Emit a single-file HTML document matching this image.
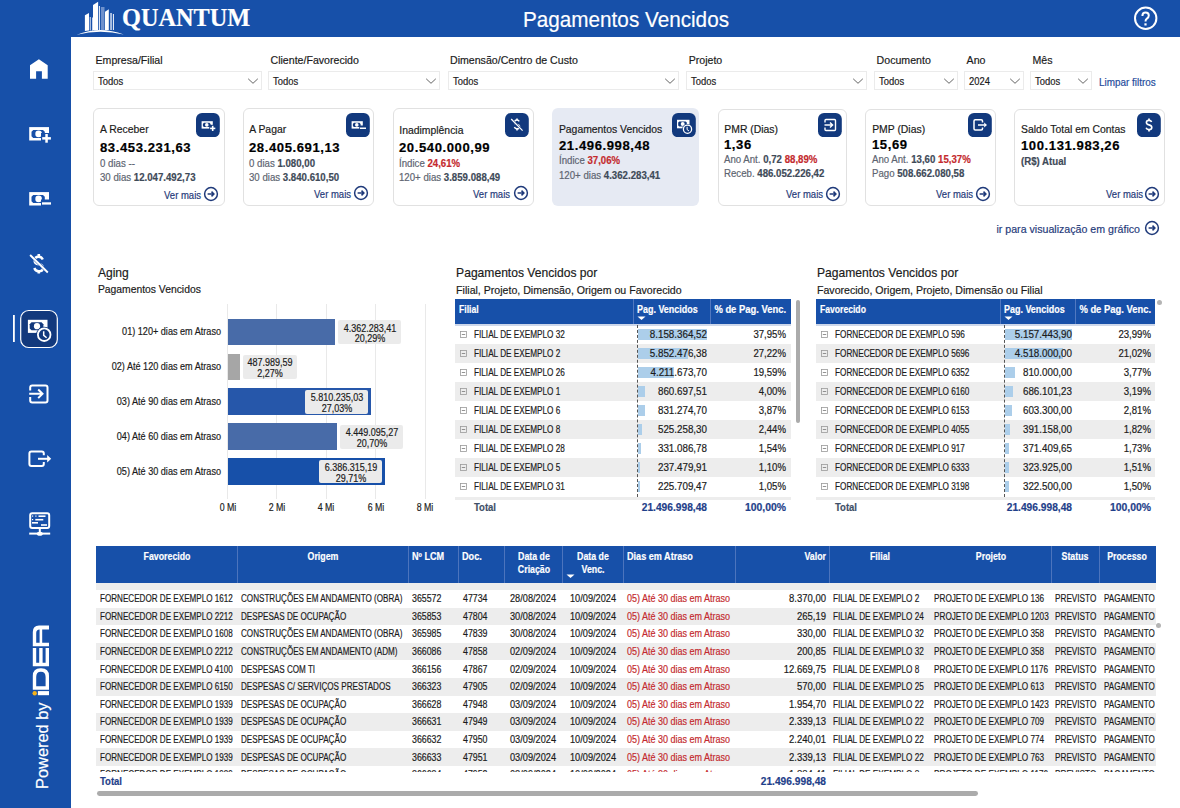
<!DOCTYPE html>
<html><head><meta charset="utf-8"><title>Pagamentos Vencidos</title>
<style>
html,body{margin:0;padding:0;width:1180px;height:808px;overflow:hidden;background:#fff;}
body{position:relative;font-family:"Liberation Sans",sans-serif;}
.t{position:absolute;white-space:nowrap;line-height:1;-webkit-text-stroke:0.18px currentColor;}
.r{position:absolute;}
b{font-weight:bold;}
</style></head><body>
<div class="r" style="left:0.00px;top:0.00px;width:71.00px;height:808.00px;background:#1750a9;"></div>
<div class="r" style="left:71.00px;top:0.00px;width:1109.00px;height:36.50px;background:#1750a9;"></div>
<svg class="r" style="left:0;top:0" width="1180" height="40" viewBox="0 0 1180 40">
<g fill="#fff">
<path d="M84.9 15.3 L89 13 L89 30.5 L84.9 31 Z"/>
<path d="M93 5.1 L98.1 1.8 L98.1 30 L93 30 Z"/>
<path d="M105 11.7 L108.8 9.2 L108.8 30 L105 30 Z"/>
<rect x="89.7" y="17" width="1.1" height="13.5" fill="#c9d6ee"/>
<rect x="92" y="17.5" width="1" height="13" fill="#c9d6ee"/>
<rect x="98.9" y="6" width="1.1" height="24" fill="#dfe7f5"/>
<rect x="100.9" y="7" width="3.6" height="23" fill="#6f91cc"/>
<rect x="110.1" y="13" width="1.9" height="17" fill="#a9bfe4"/>
<rect x="112.9" y="14" width="1.1" height="16" fill="#dfe7f5"/>
<path d="M76.8 34.8 Q100 25.5 123.8 34.6 Q100 29 76.8 34.8 Z"/>
</g></svg>
<div class="t" style="top:6.43px;font-size:24.3px;color:#fff;font-weight:bold;font-family:'Liberation Serif';left:122.00px;">QUANTUM</div>
<div class="t" style="top:9.15px;font-size:22.5px;color:#fff;left:626.30px;transform:translateX(-50%) scaleX(0.92);transform-origin:50% 0;">Pagamentos Vencidos</div>
<svg class="r" style="left:1130px;top:3px" width="32" height="32" viewBox="0 0 32 32">
<circle cx="15.7" cy="15.3" r="10.7" fill="none" stroke="#fff" stroke-width="2"/>
<path d="M12.4 12.9 Q12.4 9.6 15.6 9.6 Q18.8 9.6 18.8 12.6 Q18.8 14.4 16.9 15.6 Q15.5 16.5 15.5 18.6" fill="none" stroke="#fff" stroke-width="2"/>
<rect x="14.4" y="20.3" width="2.2" height="2.2" fill="#fff"/>
</svg>
<svg class="r" style="left:0;top:0" width="71" height="808" viewBox="0 0 71 808"><path d="M30 65.3 L38.9 59.2 L47.7 65.3 V78.7 H41.9 V71.3 H36.1 V78.7 H30 Z" fill="#fff"/><g transform="translate(0,0)"><rect x="29.2" y="127.1" width="19.8" height="13.4" fill="#fff"/><path d="M33.2 129.9 H43 L44.8 131.8 V136.2 L43 138 H33.2 L31.5 136.2 V131.8 Z" fill="#1750a9"/><circle cx="38.6" cy="133.9" r="3.3" fill="#fff"/><rect x="41" y="133" width="11" height="11" fill="#1750a9"/><rect x="45.3" y="134" width="2.5" height="8.7" fill="#fff"/><rect x="42.2" y="137.1" width="8.7" height="2.5" fill="#fff"/></g><g transform="translate(0,65)"><rect x="29.2" y="127.1" width="19.8" height="13.4" fill="#fff"/><path d="M33.2 129.9 H43 L44.8 131.8 V136.2 L43 138 H33.2 L31.5 136.2 V131.8 Z" fill="#1750a9"/><circle cx="38.6" cy="133.9" r="3.3" fill="#fff"/><rect x="41" y="134.5" width="11" height="11" fill="#1750a9"/><rect x="42" y="137.3" width="9" height="2.3" fill="#fff"/></g><g fill="none" stroke="#fff" stroke-linecap="butt">
<path d="M42.8 259.5 Q41.5 256.7 38.6 256.7 Q34.6 256.7 34.6 260.5 Q34.6 263.8 38.8 264.3 Q43 264.9 43 268.3 Q43 271.3 38.6 271.3 Q35.4 271.3 34.3 268" stroke-width="2.4"/>
<path d="M38.8 254 V257 M38.8 270.5 V273.4" stroke-width="2.6"/>
<path d="M30.1 255 L47.8 272.5" stroke-width="3.0" stroke="#1750a9"/>
<path d="M30.1 255 L47.8 272.5" stroke-width="1.9"/>
</g><rect x="20.7" y="310.5" width="36.6" height="37" rx="8" fill="#12397d" stroke="#fff" stroke-width="1.2"/><rect x="13" y="315" width="1.8" height="27" fill="#fff"/><rect x="27.9" y="319.8" width="19.6" height="13.1" fill="#fff"/>
<path d="M31.5 322.3 H41.5 L43.4 324.2 V328.4 L41.5 330.3 H31.5 L29.7 328.4 V324.2 Z" fill="#12397d"/>
<circle cx="37" cy="326.2" r="3.1" fill="#fff"/>
<circle cx="44.2" cy="334.7" r="8" fill="#12397d"/>
<circle cx="44.2" cy="334.7" r="6.3" fill="none" stroke="#fff" stroke-width="1.8"/>
<path d="M43.7 331.2 V335.3 L46.6 337.8" fill="none" stroke="#fff" stroke-width="1.5"/><g fill="none" stroke="#fff" stroke-width="2">
<path d="M30.2 390.6 V387.4 Q30.2 385.4 32.2 385.4 H45.5 Q47.5 385.4 47.5 387.4 V400.5 Q47.5 402.5 45.5 402.5 H32.2 Q30.2 402.5 30.2 400.5 V397"/>
<path d="M29.2 393.8 H42.3 M38.2 389.5 L42.5 393.8 L38.2 398.1"/>
</g><g fill="none" stroke="#fff" stroke-width="2">
<path d="M43.8 455.3 V453.6 Q43.8 451.6 41.8 451.6 H31.4 Q29.4 451.6 29.4 453.6 V464 Q29.4 466 31.4 466 H41.8 Q43.8 466 43.8 464 V462"/>
<path d="M38 458.8 H48"/>
</g>
<path d="M47.2 455.1 L51.2 458.8 L47.2 462.4 Z" fill="#fff"/><g fill="none" stroke="#fff" stroke-width="2">
<rect x="30.2" y="513.2" width="19" height="14.8" rx="2"/>
<path d="M39.8 529 V532"/>
<path d="M29.2 533.6 H50.2"/>
</g>
<ellipse cx="39.8" cy="533.7" rx="3" ry="2" fill="#fff"/>
<g fill="#fff">
<rect x="32" y="515.5" width="1.2" height="1.2"/><rect x="35.3" y="515.5" width="1.2" height="1.2"/><rect x="38.5" y="515.4" width="7" height="1.6"/>
<rect x="32" y="519" width="1.2" height="1.2"/><rect x="35.3" y="518.9" width="8" height="1.6"/>
<rect x="32" y="522" width="6" height="1.6"/><rect x="41" y="524.2" width="6" height="1.6"/>
</g></svg>
<div class="t" style="left:47.9px;top:788.6px;font-size:16.4px;color:#fff;transform:rotate(-90deg);transform-origin:0 0;line-height:1;"><span style="position:relative;top:-13.9px">Powered by</span></div>
<svg class="r" style="left:0;top:600px" width="71" height="100" viewBox="0 600 71 100">
<g fill="#fff">
<rect x="37.9" y="691.1" width="11.1" height="4.1"/>
<path fill-rule="evenodd" d="M49 689.8 H32.8 V676 Q32.8 668.3 40.5 668.3 H41.3 Q49 668.3 49 676 Z M45.6 686.2 H36.2 V677 Q36.2 671.8 40.9 671.8 Q45.6 671.8 45.6 677 Z"/>
<path d="M49 666.3 H32.8 V648 H36.2 V662.8 H39.2 V648 H42.6 V662.8 H45.6 V648 H49 Z"/>
<path d="M49 646.2 H32.8 V632 Q32.8 625.4 39 625.4 H49 V629.4 H42.2 V642.8 H49 Z M39.6 642.8 V629.4 Q36.2 629.4 36.2 633 V642.8 Z" fill-rule="evenodd"/>
</g>
<circle cx="34.7" cy="693.3" r="2.2" fill="#f5b21b"/>
</svg>
<div class="t" style="top:55.23px;font-size:10.6px;color:#1b1b1b;left:95.50px;">Empresa/Filial</div>
<div class="r" style="left:93.1px;top:71.3px;width:166.7px;height:17.2px;border:1px solid #ebebeb;background:#fff"></div>
<div class="t" style="top:77.23px;font-size:10px;color:#1b1b1b;left:98.10px;transform:scaleX(0.94);transform-origin:0 0;">Todos</div>
<svg class="r" style="left:246.8px;top:75.8px" width="12" height="10" viewBox="0 0 12 10"><path d="M1.2 2.8 L6 7.3 L10.8 2.8" fill="none" stroke="#555" stroke-width="0.9"/></svg>
<div class="t" style="top:55.23px;font-size:10.6px;color:#1b1b1b;left:270.50px;">Cliente/Favorecido</div>
<div class="r" style="left:268.0px;top:71.3px;width:170.3px;height:17.2px;border:1px solid #ebebeb;background:#fff"></div>
<div class="t" style="top:77.23px;font-size:10px;color:#1b1b1b;left:273.00px;transform:scaleX(0.94);transform-origin:0 0;">Todos</div>
<svg class="r" style="left:425.3px;top:75.8px" width="12" height="10" viewBox="0 0 12 10"><path d="M1.2 2.8 L6 7.3 L10.8 2.8" fill="none" stroke="#555" stroke-width="0.9"/></svg>
<div class="t" style="top:55.23px;font-size:10.6px;color:#1b1b1b;left:450.00px;">Dimensão/Centro de Custo</div>
<div class="r" style="left:447.5px;top:71.3px;width:229.8px;height:17.2px;border:1px solid #ebebeb;background:#fff"></div>
<div class="t" style="top:77.23px;font-size:10px;color:#1b1b1b;left:452.50px;transform:scaleX(0.94);transform-origin:0 0;">Todos</div>
<svg class="r" style="left:664.3px;top:75.8px" width="12" height="10" viewBox="0 0 12 10"><path d="M1.2 2.8 L6 7.3 L10.8 2.8" fill="none" stroke="#555" stroke-width="0.9"/></svg>
<div class="t" style="top:55.23px;font-size:10.6px;color:#1b1b1b;left:688.70px;">Projeto</div>
<div class="r" style="left:686.2px;top:71.3px;width:178.6px;height:17.2px;border:1px solid #ebebeb;background:#fff"></div>
<div class="t" style="top:77.23px;font-size:10px;color:#1b1b1b;left:691.20px;transform:scaleX(0.94);transform-origin:0 0;">Todos</div>
<svg class="r" style="left:851.8px;top:75.8px" width="12" height="10" viewBox="0 0 12 10"><path d="M1.2 2.8 L6 7.3 L10.8 2.8" fill="none" stroke="#555" stroke-width="0.9"/></svg>
<div class="t" style="top:55.23px;font-size:10.6px;color:#1b1b1b;left:876.60px;">Documento</div>
<div class="r" style="left:874.4px;top:71.3px;width:81.3px;height:17.2px;border:1px solid #ebebeb;background:#fff"></div>
<div class="t" style="top:77.23px;font-size:10px;color:#1b1b1b;left:879.40px;transform:scaleX(0.94);transform-origin:0 0;">Todos</div>
<svg class="r" style="left:942.7px;top:75.8px" width="12" height="10" viewBox="0 0 12 10"><path d="M1.2 2.8 L6 7.3 L10.8 2.8" fill="none" stroke="#555" stroke-width="0.9"/></svg>
<div class="t" style="top:55.23px;font-size:10.6px;color:#1b1b1b;left:966.60px;">Ano</div>
<div class="r" style="left:964.4px;top:71.3px;width:57.2px;height:17.2px;border:1px solid #ebebeb;background:#fff"></div>
<div class="t" style="top:77.23px;font-size:10px;color:#1b1b1b;left:969.40px;transform:scaleX(0.94);transform-origin:0 0;">2024</div>
<svg class="r" style="left:1008.6px;top:75.8px" width="12" height="10" viewBox="0 0 12 10"><path d="M1.2 2.8 L6 7.3 L10.8 2.8" fill="none" stroke="#555" stroke-width="0.9"/></svg>
<div class="t" style="top:55.23px;font-size:10.6px;color:#1b1b1b;left:1032.50px;">Mês</div>
<div class="r" style="left:1030.3px;top:71.3px;width:59.9px;height:17.2px;border:1px solid #ebebeb;background:#fff"></div>
<div class="t" style="top:77.23px;font-size:10px;color:#1b1b1b;left:1035.30px;transform:scaleX(0.94);transform-origin:0 0;">Todos</div>
<svg class="r" style="left:1077.2px;top:75.8px" width="12" height="10" viewBox="0 0 12 10"><path d="M1.2 2.8 L6 7.3 L10.8 2.8" fill="none" stroke="#555" stroke-width="0.9"/></svg>
<div class="t" style="top:77.53px;font-size:10px;color:#1f4c9c;left:1099.00px;transform:scaleX(0.99);transform-origin:0 0;">Limpar filtros</div>
<div class="r" style="left:93.3px;top:108.3px;width:129.3px;height:95.9px;background:#fff;border:1px solid #e1e1e1;border-radius:6px"></div>
<svg class="r" style="left:196.3px;top:112.7px" width="24" height="24.5" viewBox="0 0 24 24.5"><rect x="0" y="0" width="23.8" height="24.2" rx="6" fill="#12397d"/><g fill="#fff" stroke="none"><rect x="5.6" y="8.2" width="11.2" height="7.4" /><path d="M7.9 9.8 H13.5 L14.6 10.9 V13 L13.5 14.1 H7.9 L6.9 13 V10.9 Z" fill="#12397d"/><circle cx="10.8" cy="11.9" r="1.8"/><rect x="13.3" y="11.8" width="7" height="7" fill="#12397d"/><rect x="15.9" y="12.8" width="1.6" height="5.2"/><rect x="14.1" y="14.6" width="5.2" height="1.6"/></g></svg>
<div class="t" style="top:124.80px;font-size:10.4px;color:#1b1b1b;left:100.10px;">A Receber</div>
<div class="t" style="top:141.73px;font-size:12.6px;color:#000;font-weight:bold;letter-spacing:0.55px;left:100.10px;transform:scaleX(1.04);transform-origin:0 0;">83.453.231,63</div>
<div class="t" style="top:158.53px;font-size:10px;color:#5d6470;left:100.10px;transform:scaleX(0.965);transform-origin:0 0;">0 dias --</div>
<div class="t" style="top:172.73px;font-size:10px;color:#5d6470;left:100.10px;transform:scaleX(0.965);transform-origin:0 0;">30 dias <b style="color:#3e4a58">12.047.492,73</b></div>
<div class="t" style="top:191.13px;font-size:10px;color:#1f3a7a;left:200.50px;transform-origin:0 0;transform:scaleX(0.95) translateX(-100%);">Ver mais</div>
<svg class="r" style="left:203.3px;top:186.2px" width="16" height="16" viewBox="0 0 16 16"><circle cx="8" cy="8" r="6.4" fill="none" stroke="#1f3a7a" stroke-width="1.5"/><path d="M4.6 8 H10.8 M8.5 5.6 L10.9 8 L8.5 10.4" fill="none" stroke="#1f3a7a" stroke-width="1.5"/></svg>
<div class="r" style="left:243.4px;top:108.3px;width:129.0px;height:95.9px;background:#fff;border:1px solid #e1e1e1;border-radius:6px"></div>
<svg class="r" style="left:345.6px;top:112.7px" width="24" height="24.5" viewBox="0 0 24 24.5"><rect x="0" y="0" width="23.8" height="24.2" rx="6" fill="#12397d"/><g fill="#fff" stroke="none"><rect x="5.6" y="8.2" width="11.2" height="7.4" /><path d="M7.9 9.8 H13.5 L14.6 10.9 V13 L13.5 14.1 H7.9 L6.9 13 V10.9 Z" fill="#12397d"/><circle cx="10.8" cy="11.9" r="1.8"/><rect x="13.3" y="12.5" width="7.5" height="6" fill="#12397d"/><rect x="14" y="14.5" width="6" height="1.5"/></g></svg>
<div class="t" style="top:124.80px;font-size:10.4px;color:#1b1b1b;left:249.20px;">A Pagar</div>
<div class="t" style="top:141.73px;font-size:12.6px;color:#000;font-weight:bold;letter-spacing:0.55px;left:249.20px;transform:scaleX(1.04);transform-origin:0 0;">28.405.691,13</div>
<div class="t" style="top:158.53px;font-size:10px;color:#5d6470;left:249.20px;transform:scaleX(0.965);transform-origin:0 0;">0 dias <b style="color:#3e4a58">1.080,00</b></div>
<div class="t" style="top:172.73px;font-size:10px;color:#5d6470;left:249.20px;transform:scaleX(0.965);transform-origin:0 0;">30 dias <b style="color:#3e4a58">3.840.610,50</b></div>
<div class="t" style="top:189.84px;font-size:10px;color:#1f3a7a;left:350.50px;transform-origin:0 0;transform:scaleX(0.95) translateX(-100%);">Ver mais</div>
<svg class="r" style="left:353.3px;top:184.9px" width="16" height="16" viewBox="0 0 16 16"><circle cx="8" cy="8" r="6.4" fill="none" stroke="#1f3a7a" stroke-width="1.5"/><path d="M4.6 8 H10.8 M8.5 5.6 L10.9 8 L8.5 10.4" fill="none" stroke="#1f3a7a" stroke-width="1.5"/></svg>
<div class="r" style="left:392.5px;top:108.3px;width:139.0px;height:95.9px;background:#fff;border:1px solid #e1e1e1;border-radius:6px"></div>
<svg class="r" style="left:505.3px;top:112.7px" width="24" height="24.5" viewBox="0 0 24 24.5"><rect x="0" y="0" width="23.8" height="24.2" rx="6" fill="#12397d"/><g fill="#fff" stroke="none"></g><g fill="none" stroke="#fff"><path d="M14.2 8.3 Q13.5 7 12 7 Q9.6 7 9.6 9.2 Q9.6 11 12 11.4 Q14.6 11.8 14.6 13.9 Q14.6 15.8 12 15.8 Q10.1 15.8 9.4 14" stroke-width="1.5"/><path d="M12 5.5 V7.3 M12 15.5 V17.5" stroke-width="1.6"/><path d="M6.2 6 L17.6 17.6" stroke-width="2.1" stroke="#12397d"/><path d="M6.2 6 L17.6 17.6" stroke-width="1.2"/></g></svg>
<div class="t" style="top:125.70px;font-size:10.4px;color:#1b1b1b;left:399.30px;">Inadimplência</div>
<div class="t" style="top:142.33px;font-size:12.6px;color:#000;font-weight:bold;letter-spacing:0.55px;left:399.30px;transform:scaleX(1.04);transform-origin:0 0;">20.540.000,99</div>
<div class="t" style="top:159.33px;font-size:10px;color:#5d6470;left:399.30px;transform:scaleX(0.965);transform-origin:0 0;">Índice <b style="color:#c42a2e">24,61%</b></div>
<div class="t" style="top:173.33px;font-size:10px;color:#5d6470;left:399.30px;transform:scaleX(0.965);transform-origin:0 0;">120+ dias <b style="color:#3e4a58">3.859.088,49</b></div>
<div class="t" style="top:189.74px;font-size:10px;color:#1f3a7a;left:510.20px;transform-origin:0 0;transform:scaleX(0.95) translateX(-100%);">Ver mais</div>
<svg class="r" style="left:512.9px;top:184.8px" width="16" height="16" viewBox="0 0 16 16"><circle cx="8" cy="8" r="6.4" fill="none" stroke="#1f3a7a" stroke-width="1.5"/><path d="M4.6 8 H10.8 M8.5 5.6 L10.9 8 L8.5 10.4" fill="none" stroke="#1f3a7a" stroke-width="1.5"/></svg>
<div class="r" style="left:552.1px;top:108.3px;width:146.9px;height:97.7px;background:#e6eaf3;border-radius:6px"></div>
<svg class="r" style="left:671.5px;top:112.7px" width="24" height="24.5" viewBox="0 0 24 24.5"><rect x="0" y="0" width="23.8" height="24.2" rx="6" fill="#12397d"/><g fill="#fff" stroke="none"><rect x="5" y="6.8" width="12.5" height="8.5"/><path d="M7.3 8.4 H13.6 L14.8 9.6 V12.4 L13.6 13.6 H7.3 L6.2 12.4 V9.6 Z" fill="#12397d"/><circle cx="10.7" cy="11" r="2"/><circle cx="15.5" cy="16.2" r="5.3" fill="#12397d"/></g><g fill="none" stroke="#fff"><circle cx="15.5" cy="16.2" r="4.1" stroke-width="1.3"/><path d="M15.1 13.8 V16.6 L17 18" stroke-width="1"/></g></svg>
<div class="t" style="top:124.80px;font-size:10.4px;color:#1b1b1b;left:558.90px;">Pagamentos Vencidos</div>
<div class="t" style="top:139.63px;font-size:12.6px;color:#000;font-weight:bold;letter-spacing:0.55px;left:558.90px;transform:scaleX(1.04);transform-origin:0 0;">21.496.998,48</div>
<div class="t" style="top:156.43px;font-size:10px;color:#5d6470;left:558.90px;transform:scaleX(0.965);transform-origin:0 0;">Índice <b style="color:#c42a2e">37,06%</b></div>
<div class="t" style="top:170.63px;font-size:10px;color:#5d6470;left:558.90px;transform:scaleX(0.965);transform-origin:0 0;">120+ dias <b style="color:#3e4a58">4.362.283,41</b></div>
<div class="r" style="left:717.5px;top:109.2px;width:127.7px;height:95.0px;background:#fff;border:1px solid #e1e1e1;border-radius:6px"></div>
<svg class="r" style="left:818.2px;top:112.7px" width="24" height="24.5" viewBox="0 0 24 24.5"><rect x="0" y="0" width="23.8" height="24.2" rx="6" fill="#12397d"/><g fill="#fff" stroke="none"></g><g fill="none" stroke="#fff" stroke-width="1.4"><path d="M7 9.5 V7.5 Q7 6.5 8 6.5 H16.5 Q17.5 6.5 17.5 7.5 V16.5 Q17.5 17.5 16.5 17.5 H8 Q7 17.5 7 16.5 V14.5"/><path d="M6.5 12 H14.6 M12 9.4 L14.6 12 L12 14.6"/></g></svg>
<div class="t" style="top:124.50px;font-size:10.4px;color:#1b1b1b;left:724.30px;">PMR (Dias)</div>
<div class="t" style="top:139.03px;font-size:12.6px;color:#000;font-weight:bold;letter-spacing:0.55px;left:724.30px;transform:scaleX(1.04);transform-origin:0 0;">1,36</div>
<div class="t" style="top:155.33px;font-size:10px;color:#5d6470;left:724.30px;transform:scaleX(0.965);transform-origin:0 0;">Ano Ant. <b style="color:#3e4a58">0,72</b> <b style="color:#c42a2e">88,89%</b></div>
<div class="t" style="top:169.23px;font-size:10px;color:#5d6470;left:724.30px;transform:scaleX(0.965);transform-origin:0 0;">Receb. <b style="color:#3e4a58">486.052.226,42</b></div>
<div class="t" style="top:190.44px;font-size:10px;color:#1f3a7a;left:822.70px;transform-origin:0 0;transform:scaleX(0.95) translateX(-100%);">Ver mais</div>
<svg class="r" style="left:824.7px;top:185.5px" width="16" height="16" viewBox="0 0 16 16"><circle cx="8" cy="8" r="6.4" fill="none" stroke="#1f3a7a" stroke-width="1.5"/><path d="M4.6 8 H10.8 M8.5 5.6 L10.9 8 L8.5 10.4" fill="none" stroke="#1f3a7a" stroke-width="1.5"/></svg>
<div class="r" style="left:865.4px;top:109.2px;width:128.2px;height:95.0px;background:#fff;border:1px solid #e1e1e1;border-radius:6px"></div>
<svg class="r" style="left:967.5px;top:112.7px" width="24" height="24.5" viewBox="0 0 24 24.5"><rect x="0" y="0" width="23.8" height="24.2" rx="6" fill="#12397d"/><g fill="#fff" stroke="none"></g><g fill="none" stroke="#fff" stroke-width="1.5"><path d="M14.5 9.5 V8 Q14.5 6.8 13.3 6.8 H7.2 Q6 6.8 6 8 V15.8 Q6 17 7.2 17 H13.3 Q14.5 17 14.5 15.8 V14.5"/><path d="M10 12 H16.5"/></g><g fill="#fff"><path d="M16.2 9.5 L19 12 L16.2 14.5 Z"/></g></svg>
<div class="t" style="top:124.50px;font-size:10.4px;color:#1b1b1b;left:872.20px;">PMP (Dias)</div>
<div class="t" style="top:139.03px;font-size:12.6px;color:#000;font-weight:bold;letter-spacing:0.55px;left:872.20px;transform:scaleX(1.04);transform-origin:0 0;">15,69</div>
<div class="t" style="top:155.33px;font-size:10px;color:#5d6470;left:872.20px;transform:scaleX(0.965);transform-origin:0 0;">Ano Ant. <b style="color:#3e4a58">13,60</b> <b style="color:#c42a2e">15,37%</b></div>
<div class="t" style="top:169.23px;font-size:10px;color:#5d6470;left:872.20px;transform:scaleX(0.965);transform-origin:0 0;">Pago <b style="color:#3e4a58">508.662.080,58</b></div>
<div class="t" style="top:190.44px;font-size:10px;color:#1f3a7a;left:972.70px;transform-origin:0 0;transform:scaleX(0.95) translateX(-100%);">Ver mais</div>
<svg class="r" style="left:974.7px;top:185.5px" width="16" height="16" viewBox="0 0 16 16"><circle cx="8" cy="8" r="6.4" fill="none" stroke="#1f3a7a" stroke-width="1.5"/><path d="M4.6 8 H10.8 M8.5 5.6 L10.9 8 L8.5 10.4" fill="none" stroke="#1f3a7a" stroke-width="1.5"/></svg>
<div class="r" style="left:1014.3px;top:109.2px;width:148.5px;height:95.0px;background:#fff;border:1px solid #e1e1e1;border-radius:6px"></div>
<svg class="r" style="left:1136.5px;top:112.7px" width="24" height="24.5" viewBox="0 0 24 24.5"><rect x="0" y="0" width="23.8" height="24.2" rx="6" fill="#12397d"/><g fill="#fff" stroke="none"></g><g fill="none" stroke="#fff"><path d="M14.6 9 Q14 7.4 12 7.4 Q9.4 7.4 9.4 9.6 Q9.4 11.4 12 11.9 Q14.8 12.4 14.8 14.5 Q14.8 16.6 12 16.6 Q9.7 16.6 9.1 14.8" stroke-width="1.6"/><path d="M12 5.6 V7.6 M12 16.4 V18.6" stroke-width="1.7"/></g></svg>
<div class="t" style="top:124.80px;font-size:10.4px;color:#1b1b1b;left:1021.10px;">Saldo Total em Contas</div>
<div class="t" style="top:139.63px;font-size:12.6px;color:#000;font-weight:bold;letter-spacing:0.55px;left:1021.10px;transform:scaleX(1.04);transform-origin:0 0;">100.131.983,26</div>
<div class="t" style="top:157.03px;font-size:10px;color:#5d6470;left:1021.10px;transform:scaleX(0.965);transform-origin:0 0;"><b style="color:#3e4a58">(R$) Atual</b></div>
<div class="t" style="top:190.44px;font-size:10px;color:#1f3a7a;left:1142.70px;transform-origin:0 0;transform:scaleX(0.95) translateX(-100%);">Ver mais</div>
<svg class="r" style="left:1144.4px;top:185.5px" width="16" height="16" viewBox="0 0 16 16"><circle cx="8" cy="8" r="6.4" fill="none" stroke="#1f3a7a" stroke-width="1.5"/><path d="M4.6 8 H10.8 M8.5 5.6 L10.9 8 L8.5 10.4" fill="none" stroke="#1f3a7a" stroke-width="1.5"/></svg>
<div class="t" style="top:223.72px;font-size:11.2px;color:#1f3a7a;left:1140.20px;transform-origin:0 0;transform:scaleX(0.95) translateX(-100%);">ir para visualização em gráfico</div>
<svg class="r" style="left:1143.5px;top:220px" width="16" height="16" viewBox="0 0 16 16"><circle cx="8" cy="8" r="6.4" fill="none" stroke="#1f3a7a" stroke-width="1.5"/><path d="M4.6 8 H10.8 M8.5 5.6 L10.9 8 L8.5 10.4" fill="none" stroke="#1f3a7a" stroke-width="1.5"/></svg>
<div class="t" style="top:266.76px;font-size:12.1px;color:#1b1b1b;left:97.90px;">Aging</div>
<div class="t" style="top:284.74px;font-size:10.35px;color:#1b1b1b;left:97.90px;">Pagamentos Vencidos</div>
<div class="r" style="left:227.00px;top:304.00px;width:1.00px;height:195.00px;background:#e9e9e9;"></div>
<div class="t" style="top:502.54px;font-size:10px;color:#1b1b1b;left:227.50px;transform:translateX(-50%) scaleX(0.88);transform-origin:50% 0;">0 Mi</div>
<div class="r" style="left:276.40px;top:304.00px;width:1.00px;height:195.00px;background:#e9e9e9;"></div>
<div class="t" style="top:502.54px;font-size:10px;color:#1b1b1b;left:276.90px;transform:translateX(-50%) scaleX(0.88);transform-origin:50% 0;">2 Mi</div>
<div class="r" style="left:325.80px;top:304.00px;width:1.00px;height:195.00px;background:#e9e9e9;"></div>
<div class="t" style="top:502.54px;font-size:10px;color:#1b1b1b;left:326.30px;transform:translateX(-50%) scaleX(0.88);transform-origin:50% 0;">4 Mi</div>
<div class="r" style="left:375.20px;top:304.00px;width:1.00px;height:195.00px;background:#e9e9e9;"></div>
<div class="t" style="top:502.54px;font-size:10px;color:#1b1b1b;left:375.70px;transform:translateX(-50%) scaleX(0.88);transform-origin:50% 0;">6 Mi</div>
<div class="r" style="left:424.60px;top:304.00px;width:1.00px;height:195.00px;background:#e9e9e9;"></div>
<div class="t" style="top:502.54px;font-size:10px;color:#1b1b1b;left:425.10px;transform:translateX(-50%) scaleX(0.88);transform-origin:50% 0;">8 Mi</div>
<div class="r" style="left:227.50px;top:318.60px;width:107.75px;height:26.80px;background:#486ba8;"></div>
<div class="t" style="top:327.44px;font-size:10px;color:#1b1b1b;left:220.80px;transform-origin:0 0;transform:scaleX(0.91) translateX(-100%);">01) 120+ dias em Atraso</div>
<div class="r" style="left:338.25px;top:320.10px;width:62.50px;height:23.80px;background:#ebebeb;border-radius:2px"></div>
<div class="t" style="top:323.54px;font-size:10px;color:#1b1b1b;left:369.50px;transform:translateX(-50%) scaleX(0.9);transform-origin:50% 0;">4.362.283,41</div>
<div class="t" style="top:334.44px;font-size:10px;color:#1b1b1b;left:369.50px;transform:translateX(-50%) scaleX(0.9);transform-origin:50% 0;">20,29%</div>
<div class="r" style="left:227.50px;top:353.50px;width:12.05px;height:26.80px;background:#a6a6a6;"></div>
<div class="t" style="top:362.34px;font-size:10px;color:#1b1b1b;left:220.80px;transform-origin:0 0;transform:scaleX(0.91) translateX(-100%);">02) Até 120 dias em Atraso</div>
<div class="r" style="left:242.55px;top:355.00px;width:54.40px;height:23.80px;background:#ebebeb;border-radius:2px"></div>
<div class="t" style="top:358.44px;font-size:10px;color:#1b1b1b;left:269.75px;transform:translateX(-50%) scaleX(0.9);transform-origin:50% 0;">487.989,59</div>
<div class="t" style="top:369.34px;font-size:10px;color:#1b1b1b;left:269.75px;transform:translateX(-50%) scaleX(0.9);transform-origin:50% 0;">2,27%</div>
<div class="r" style="left:227.50px;top:388.40px;width:143.51px;height:26.80px;background:#2657aa;"></div>
<div class="t" style="top:397.24px;font-size:10px;color:#1b1b1b;left:220.80px;transform-origin:0 0;transform:scaleX(0.91) translateX(-100%);">03) Até 90 dias em Atraso</div>
<div class="r" style="left:305.21px;top:389.90px;width:63.00px;height:23.80px;background:#ebebeb;border-radius:2px"></div>
<div class="t" style="top:393.34px;font-size:10px;color:#1b1b1b;left:336.71px;transform:translateX(-50%) scaleX(0.9);transform-origin:50% 0;">5.810.235,03</div>
<div class="t" style="top:404.24px;font-size:10px;color:#1b1b1b;left:336.71px;transform:translateX(-50%) scaleX(0.9);transform-origin:50% 0;">27,03%</div>
<div class="r" style="left:227.50px;top:423.30px;width:109.89px;height:26.80px;background:#486ba8;"></div>
<div class="t" style="top:432.14px;font-size:10px;color:#1b1b1b;left:220.80px;transform-origin:0 0;transform:scaleX(0.91) translateX(-100%);">04) Até 60 dias em Atraso</div>
<div class="r" style="left:340.39px;top:424.80px;width:62.50px;height:23.80px;background:#ebebeb;border-radius:2px"></div>
<div class="t" style="top:428.24px;font-size:10px;color:#1b1b1b;left:371.64px;transform:translateX(-50%) scaleX(0.9);transform-origin:50% 0;">4.449.095,27</div>
<div class="t" style="top:439.14px;font-size:10px;color:#1b1b1b;left:371.64px;transform:translateX(-50%) scaleX(0.9);transform-origin:50% 0;">20,70%</div>
<div class="r" style="left:227.50px;top:458.20px;width:157.74px;height:26.80px;background:#1750a9;"></div>
<div class="t" style="top:467.04px;font-size:10px;color:#1b1b1b;left:220.80px;transform-origin:0 0;transform:scaleX(0.91) translateX(-100%);">05) Até 30 dias em Atraso</div>
<div class="r" style="left:319.44px;top:459.70px;width:63.00px;height:23.80px;background:#ebebeb;border-radius:2px"></div>
<div class="t" style="top:463.14px;font-size:10px;color:#1b1b1b;left:350.94px;transform:translateX(-50%) scaleX(0.9);transform-origin:50% 0;">6.386.315,19</div>
<div class="t" style="top:474.04px;font-size:10px;color:#1b1b1b;left:350.94px;transform:translateX(-50%) scaleX(0.9);transform-origin:50% 0;">29,71%</div>
<div class="t" style="top:266.76px;font-size:12.1px;color:#1b1b1b;left:456.10px;">Pagamentos Vencidos por</div>
<div class="t" style="top:284.63px;font-size:10.6px;color:#1b1b1b;left:456.10px;">Filial, Projeto, Dimensão, Origem ou Favorecido</div>
<div class="r" style="left:455.20px;top:299.20px;width:335.50px;height:24.50px;background:#1750a9;"></div>
<div class="r" style="left:633.10px;top:299.20px;width:1.00px;height:24.50px;background:#5178c0;"></div>
<div class="r" style="left:709.90px;top:299.20px;width:1.00px;height:24.50px;background:#5178c0;"></div>
<div class="t" style="top:304.54px;font-size:10px;color:#fff;font-weight:bold;left:458.90px;transform:scaleX(0.86);transform-origin:0 0;">Filial</div>
<div class="t" style="top:304.54px;font-size:10px;color:#fff;font-weight:bold;left:637.40px;transform:scaleX(0.895);transform-origin:0 0;">Pag. Vencidos</div>
<div class="t" style="top:304.54px;font-size:10px;color:#fff;font-weight:bold;left:786.30px;transform-origin:0 0;transform:scaleX(0.94) translateX(-100%);">% de Pag. Venc.</div>
<svg class="r" style="left:637.4px;top:315.5px" width="10" height="5" viewBox="0 0 10 5"><path d="M0.5 0.5 L8.5 0.5 L4.5 4 Z" fill="#fff"/></svg>
<div class="r" style="left:637.70px;top:328.90px;width:69.70px;height:11.60px;background:#acceea;"></div>
<svg class="r" style="left:459.8px;top:331.3px" width="7" height="7" viewBox="0 0 7 7"><rect x="0.5" y="0.5" width="6" height="6" fill="none" stroke="#9a9a9a" stroke-width="0.8"/><path d="M1.8 3.5 H5.2" stroke="#777" stroke-width="0.8"/></svg>
<div class="t" style="top:330.04px;font-size:10px;color:#1b1b1b;left:474.20px;transform:scaleX(0.82);transform-origin:0 0;">FILIAL DE EXEMPLO 32</div>
<div class="t" style="top:330.24px;font-size:10px;color:#1b1b1b;left:707.20px;transform-origin:0 0;transform:scaleX(0.98) translateX(-100%);">8.158.364,52</div>
<div class="t" style="top:330.24px;font-size:10px;color:#1b1b1b;left:786.30px;transform-origin:0 0;transform:scaleX(0.96) translateX(-100%);">37,95%</div>
<div class="r" style="left:455.20px;top:344.30px;width:335.50px;height:19.00px;background:#ededed;"></div>
<div class="r" style="left:637.70px;top:347.90px;width:50.00px;height:11.60px;background:#acceea;"></div>
<svg class="r" style="left:459.8px;top:350.3px" width="7" height="7" viewBox="0 0 7 7"><rect x="0.5" y="0.5" width="6" height="6" fill="none" stroke="#9a9a9a" stroke-width="0.8"/><path d="M1.8 3.5 H5.2" stroke="#777" stroke-width="0.8"/></svg>
<div class="t" style="top:349.04px;font-size:10px;color:#1b1b1b;left:474.20px;transform:scaleX(0.82);transform-origin:0 0;">FILIAL DE EXEMPLO 2</div>
<div class="t" style="top:349.24px;font-size:10px;color:#1b1b1b;left:707.20px;transform-origin:0 0;transform:scaleX(0.98) translateX(-100%);">5.852.476,38</div>
<div class="t" style="top:349.24px;font-size:10px;color:#1b1b1b;left:786.30px;transform-origin:0 0;transform:scaleX(0.96) translateX(-100%);">27,22%</div>
<div class="r" style="left:637.70px;top:366.90px;width:35.98px;height:11.60px;background:#acceea;"></div>
<svg class="r" style="left:459.8px;top:369.3px" width="7" height="7" viewBox="0 0 7 7"><rect x="0.5" y="0.5" width="6" height="6" fill="none" stroke="#9a9a9a" stroke-width="0.8"/><path d="M1.8 3.5 H5.2" stroke="#777" stroke-width="0.8"/></svg>
<div class="t" style="top:368.04px;font-size:10px;color:#1b1b1b;left:474.20px;transform:scaleX(0.82);transform-origin:0 0;">FILIAL DE EXEMPLO 26</div>
<div class="t" style="top:368.24px;font-size:10px;color:#1b1b1b;left:707.20px;transform-origin:0 0;transform:scaleX(0.98) translateX(-100%);">4.211.673,70</div>
<div class="t" style="top:368.24px;font-size:10px;color:#1b1b1b;left:786.30px;transform-origin:0 0;transform:scaleX(0.96) translateX(-100%);">19,59%</div>
<div class="r" style="left:455.20px;top:382.30px;width:335.50px;height:19.00px;background:#ededed;"></div>
<div class="r" style="left:637.70px;top:385.90px;width:7.35px;height:11.60px;background:#acceea;"></div>
<svg class="r" style="left:459.8px;top:388.3px" width="7" height="7" viewBox="0 0 7 7"><rect x="0.5" y="0.5" width="6" height="6" fill="none" stroke="#9a9a9a" stroke-width="0.8"/><path d="M1.8 3.5 H5.2" stroke="#777" stroke-width="0.8"/></svg>
<div class="t" style="top:387.04px;font-size:10px;color:#1b1b1b;left:474.20px;transform:scaleX(0.82);transform-origin:0 0;">FILIAL DE EXEMPLO 1</div>
<div class="t" style="top:387.24px;font-size:10px;color:#1b1b1b;left:707.20px;transform-origin:0 0;transform:scaleX(0.98) translateX(-100%);">860.697,51</div>
<div class="t" style="top:387.24px;font-size:10px;color:#1b1b1b;left:786.30px;transform-origin:0 0;transform:scaleX(0.96) translateX(-100%);">4,00%</div>
<div class="r" style="left:637.70px;top:404.90px;width:7.10px;height:11.60px;background:#acceea;"></div>
<svg class="r" style="left:459.8px;top:407.3px" width="7" height="7" viewBox="0 0 7 7"><rect x="0.5" y="0.5" width="6" height="6" fill="none" stroke="#9a9a9a" stroke-width="0.8"/><path d="M1.8 3.5 H5.2" stroke="#777" stroke-width="0.8"/></svg>
<div class="t" style="top:406.04px;font-size:10px;color:#1b1b1b;left:474.20px;transform:scaleX(0.82);transform-origin:0 0;">FILIAL DE EXEMPLO 6</div>
<div class="t" style="top:406.24px;font-size:10px;color:#1b1b1b;left:707.20px;transform-origin:0 0;transform:scaleX(0.98) translateX(-100%);">831.274,70</div>
<div class="t" style="top:406.24px;font-size:10px;color:#1b1b1b;left:786.30px;transform-origin:0 0;transform:scaleX(0.96) translateX(-100%);">3,87%</div>
<div class="r" style="left:455.20px;top:420.30px;width:335.50px;height:19.00px;background:#ededed;"></div>
<div class="r" style="left:637.70px;top:423.90px;width:4.49px;height:11.60px;background:#acceea;"></div>
<svg class="r" style="left:459.8px;top:426.3px" width="7" height="7" viewBox="0 0 7 7"><rect x="0.5" y="0.5" width="6" height="6" fill="none" stroke="#9a9a9a" stroke-width="0.8"/><path d="M1.8 3.5 H5.2" stroke="#777" stroke-width="0.8"/></svg>
<div class="t" style="top:425.04px;font-size:10px;color:#1b1b1b;left:474.20px;transform:scaleX(0.82);transform-origin:0 0;">FILIAL DE EXEMPLO 8</div>
<div class="t" style="top:425.24px;font-size:10px;color:#1b1b1b;left:707.20px;transform-origin:0 0;transform:scaleX(0.98) translateX(-100%);">525.258,30</div>
<div class="t" style="top:425.24px;font-size:10px;color:#1b1b1b;left:786.30px;transform-origin:0 0;transform:scaleX(0.96) translateX(-100%);">2,44%</div>
<div class="r" style="left:637.70px;top:442.90px;width:2.83px;height:11.60px;background:#acceea;"></div>
<svg class="r" style="left:459.8px;top:445.3px" width="7" height="7" viewBox="0 0 7 7"><rect x="0.5" y="0.5" width="6" height="6" fill="none" stroke="#9a9a9a" stroke-width="0.8"/><path d="M1.8 3.5 H5.2" stroke="#777" stroke-width="0.8"/></svg>
<div class="t" style="top:444.04px;font-size:10px;color:#1b1b1b;left:474.20px;transform:scaleX(0.82);transform-origin:0 0;">FILIAL DE EXEMPLO 28</div>
<div class="t" style="top:444.24px;font-size:10px;color:#1b1b1b;left:707.20px;transform-origin:0 0;transform:scaleX(0.98) translateX(-100%);">331.086,78</div>
<div class="t" style="top:444.24px;font-size:10px;color:#1b1b1b;left:786.30px;transform-origin:0 0;transform:scaleX(0.96) translateX(-100%);">1,54%</div>
<div class="r" style="left:455.20px;top:458.30px;width:335.50px;height:19.00px;background:#ededed;"></div>
<div class="r" style="left:637.70px;top:461.90px;width:2.03px;height:11.60px;background:#acceea;"></div>
<svg class="r" style="left:459.8px;top:464.3px" width="7" height="7" viewBox="0 0 7 7"><rect x="0.5" y="0.5" width="6" height="6" fill="none" stroke="#9a9a9a" stroke-width="0.8"/><path d="M1.8 3.5 H5.2" stroke="#777" stroke-width="0.8"/></svg>
<div class="t" style="top:463.04px;font-size:10px;color:#1b1b1b;left:474.20px;transform:scaleX(0.82);transform-origin:0 0;">FILIAL DE EXEMPLO 5</div>
<div class="t" style="top:463.24px;font-size:10px;color:#1b1b1b;left:707.20px;transform-origin:0 0;transform:scaleX(0.98) translateX(-100%);">237.479,91</div>
<div class="t" style="top:463.24px;font-size:10px;color:#1b1b1b;left:786.30px;transform-origin:0 0;transform:scaleX(0.96) translateX(-100%);">1,10%</div>
<div class="r" style="left:637.70px;top:480.90px;width:1.93px;height:11.60px;background:#acceea;"></div>
<svg class="r" style="left:459.8px;top:483.3px" width="7" height="7" viewBox="0 0 7 7"><rect x="0.5" y="0.5" width="6" height="6" fill="none" stroke="#9a9a9a" stroke-width="0.8"/><path d="M1.8 3.5 H5.2" stroke="#777" stroke-width="0.8"/></svg>
<div class="t" style="top:482.04px;font-size:10px;color:#1b1b1b;left:474.20px;transform:scaleX(0.82);transform-origin:0 0;">FILIAL DE EXEMPLO 31</div>
<div class="t" style="top:482.24px;font-size:10px;color:#1b1b1b;left:707.20px;transform-origin:0 0;transform:scaleX(0.98) translateX(-100%);">225.709,47</div>
<div class="t" style="top:482.24px;font-size:10px;color:#1b1b1b;left:786.30px;transform-origin:0 0;transform:scaleX(0.96) translateX(-100%);">1,05%</div>
<div class="r" style="left:455.20px;top:497.30px;width:335.50px;height:2.60px;background:#ededed;"></div>
<div class="r" style="left:455.20px;top:323.80px;width:335.50px;height:2.00px;background:#cdd7ea;"></div>
<div class="r" style="left:637.2px;top:325px;width:0;height:172px;border-left:1px dashed #555"></div>
<div class="t" style="top:503.44px;font-size:10px;color:#3f5068;font-weight:bold;left:474.20px;transform:scaleX(0.95);transform-origin:0 0;">Total</div>
<div class="t" style="top:503.44px;font-size:10px;color:#1f3f8a;font-weight:bold;left:707.20px;transform-origin:0 0;transform:scaleX(1.02) translateX(-100%);">21.496.998,48</div>
<div class="t" style="top:503.44px;font-size:10px;color:#1f3f8a;font-weight:bold;left:786.30px;transform-origin:0 0;transform:scaleX(1.04) translateX(-100%);">100,00%</div>
<div class="r" style="left:795.80px;top:300.20px;width:4.70px;height:122.80px;background:#ababab;border-radius:2.4px"></div>
<div class="t" style="top:266.76px;font-size:12.1px;color:#1b1b1b;left:817.00px;">Pagamentos Vencidos por</div>
<div class="t" style="top:284.63px;font-size:10.6px;color:#1b1b1b;left:817.00px;">Favorecido, Origem, Projeto, Dimensão ou Filial</div>
<div class="r" style="left:816.10px;top:299.20px;width:338.90px;height:24.50px;background:#1750a9;"></div>
<div class="r" style="left:999.90px;top:299.20px;width:1.00px;height:24.50px;background:#5178c0;"></div>
<div class="r" style="left:1074.70px;top:299.20px;width:1.00px;height:24.50px;background:#5178c0;"></div>
<div class="t" style="top:304.54px;font-size:10px;color:#fff;font-weight:bold;left:819.80px;transform:scaleX(0.86);transform-origin:0 0;">Favorecido</div>
<div class="t" style="top:304.54px;font-size:10px;color:#fff;font-weight:bold;left:1004.20px;transform:scaleX(0.895);transform-origin:0 0;">Pag. Vencidos</div>
<div class="t" style="top:304.54px;font-size:10px;color:#fff;font-weight:bold;left:1151.40px;transform-origin:0 0;transform:scaleX(0.94) translateX(-100%);">% de Pag. Venc.</div>
<svg class="r" style="left:1004.2px;top:315.5px" width="10" height="5" viewBox="0 0 10 5"><path d="M0.5 0.5 L8.5 0.5 L4.5 4 Z" fill="#fff"/></svg>
<div class="r" style="left:1004.50px;top:328.90px;width:67.30px;height:11.60px;background:#acceea;"></div>
<svg class="r" style="left:820.8px;top:331.3px" width="7" height="7" viewBox="0 0 7 7"><rect x="0.5" y="0.5" width="6" height="6" fill="none" stroke="#9a9a9a" stroke-width="0.8"/><path d="M1.8 3.5 H5.2" stroke="#777" stroke-width="0.8"/></svg>
<div class="t" style="top:330.04px;font-size:10px;color:#1b1b1b;left:835.00px;transform:scaleX(0.82);transform-origin:0 0;">FORNECEDOR DE EXEMPLO 596</div>
<div class="t" style="top:330.24px;font-size:10px;color:#1b1b1b;left:1072.00px;transform-origin:0 0;transform:scaleX(0.98) translateX(-100%);">5.157.443,90</div>
<div class="t" style="top:330.24px;font-size:10px;color:#1b1b1b;left:1151.40px;transform-origin:0 0;transform:scaleX(0.96) translateX(-100%);">23,99%</div>
<div class="r" style="left:816.10px;top:344.30px;width:338.90px;height:19.00px;background:#ededed;"></div>
<div class="r" style="left:1004.50px;top:347.90px;width:58.96px;height:11.60px;background:#acceea;"></div>
<svg class="r" style="left:820.8px;top:350.3px" width="7" height="7" viewBox="0 0 7 7"><rect x="0.5" y="0.5" width="6" height="6" fill="none" stroke="#9a9a9a" stroke-width="0.8"/><path d="M1.8 3.5 H5.2" stroke="#777" stroke-width="0.8"/></svg>
<div class="t" style="top:349.04px;font-size:10px;color:#1b1b1b;left:835.00px;transform:scaleX(0.82);transform-origin:0 0;">FORNECEDOR DE EXEMPLO 5696</div>
<div class="t" style="top:349.24px;font-size:10px;color:#1b1b1b;left:1072.00px;transform-origin:0 0;transform:scaleX(0.98) translateX(-100%);">4.518.000,00</div>
<div class="t" style="top:349.24px;font-size:10px;color:#1b1b1b;left:1151.40px;transform-origin:0 0;transform:scaleX(0.96) translateX(-100%);">21,02%</div>
<div class="r" style="left:1004.50px;top:366.90px;width:10.57px;height:11.60px;background:#acceea;"></div>
<svg class="r" style="left:820.8px;top:369.3px" width="7" height="7" viewBox="0 0 7 7"><rect x="0.5" y="0.5" width="6" height="6" fill="none" stroke="#9a9a9a" stroke-width="0.8"/><path d="M1.8 3.5 H5.2" stroke="#777" stroke-width="0.8"/></svg>
<div class="t" style="top:368.04px;font-size:10px;color:#1b1b1b;left:835.00px;transform:scaleX(0.82);transform-origin:0 0;">FORNECEDOR DE EXEMPLO 6352</div>
<div class="t" style="top:368.24px;font-size:10px;color:#1b1b1b;left:1072.00px;transform-origin:0 0;transform:scaleX(0.98) translateX(-100%);">810.000,00</div>
<div class="t" style="top:368.24px;font-size:10px;color:#1b1b1b;left:1151.40px;transform-origin:0 0;transform:scaleX(0.96) translateX(-100%);">3,77%</div>
<div class="r" style="left:816.10px;top:382.30px;width:338.90px;height:19.00px;background:#ededed;"></div>
<div class="r" style="left:1004.50px;top:385.90px;width:8.95px;height:11.60px;background:#acceea;"></div>
<svg class="r" style="left:820.8px;top:388.3px" width="7" height="7" viewBox="0 0 7 7"><rect x="0.5" y="0.5" width="6" height="6" fill="none" stroke="#9a9a9a" stroke-width="0.8"/><path d="M1.8 3.5 H5.2" stroke="#777" stroke-width="0.8"/></svg>
<div class="t" style="top:387.04px;font-size:10px;color:#1b1b1b;left:835.00px;transform:scaleX(0.82);transform-origin:0 0;">FORNECEDOR DE EXEMPLO 6160</div>
<div class="t" style="top:387.24px;font-size:10px;color:#1b1b1b;left:1072.00px;transform-origin:0 0;transform:scaleX(0.98) translateX(-100%);">686.101,23</div>
<div class="t" style="top:387.24px;font-size:10px;color:#1b1b1b;left:1151.40px;transform-origin:0 0;transform:scaleX(0.96) translateX(-100%);">3,19%</div>
<div class="r" style="left:1004.50px;top:404.90px;width:7.87px;height:11.60px;background:#acceea;"></div>
<svg class="r" style="left:820.8px;top:407.3px" width="7" height="7" viewBox="0 0 7 7"><rect x="0.5" y="0.5" width="6" height="6" fill="none" stroke="#9a9a9a" stroke-width="0.8"/><path d="M1.8 3.5 H5.2" stroke="#777" stroke-width="0.8"/></svg>
<div class="t" style="top:406.04px;font-size:10px;color:#1b1b1b;left:835.00px;transform:scaleX(0.82);transform-origin:0 0;">FORNECEDOR DE EXEMPLO 6153</div>
<div class="t" style="top:406.24px;font-size:10px;color:#1b1b1b;left:1072.00px;transform-origin:0 0;transform:scaleX(0.98) translateX(-100%);">603.300,00</div>
<div class="t" style="top:406.24px;font-size:10px;color:#1b1b1b;left:1151.40px;transform-origin:0 0;transform:scaleX(0.96) translateX(-100%);">2,81%</div>
<div class="r" style="left:816.10px;top:420.30px;width:338.90px;height:19.00px;background:#ededed;"></div>
<div class="r" style="left:1004.50px;top:423.90px;width:5.10px;height:11.60px;background:#acceea;"></div>
<svg class="r" style="left:820.8px;top:426.3px" width="7" height="7" viewBox="0 0 7 7"><rect x="0.5" y="0.5" width="6" height="6" fill="none" stroke="#9a9a9a" stroke-width="0.8"/><path d="M1.8 3.5 H5.2" stroke="#777" stroke-width="0.8"/></svg>
<div class="t" style="top:425.04px;font-size:10px;color:#1b1b1b;left:835.00px;transform:scaleX(0.82);transform-origin:0 0;">FORNECEDOR DE EXEMPLO 4055</div>
<div class="t" style="top:425.24px;font-size:10px;color:#1b1b1b;left:1072.00px;transform-origin:0 0;transform:scaleX(0.98) translateX(-100%);">391.158,00</div>
<div class="t" style="top:425.24px;font-size:10px;color:#1b1b1b;left:1151.40px;transform-origin:0 0;transform:scaleX(0.96) translateX(-100%);">1,82%</div>
<div class="r" style="left:1004.50px;top:442.90px;width:4.85px;height:11.60px;background:#acceea;"></div>
<svg class="r" style="left:820.8px;top:445.3px" width="7" height="7" viewBox="0 0 7 7"><rect x="0.5" y="0.5" width="6" height="6" fill="none" stroke="#9a9a9a" stroke-width="0.8"/><path d="M1.8 3.5 H5.2" stroke="#777" stroke-width="0.8"/></svg>
<div class="t" style="top:444.04px;font-size:10px;color:#1b1b1b;left:835.00px;transform:scaleX(0.82);transform-origin:0 0;">FORNECEDOR DE EXEMPLO 917</div>
<div class="t" style="top:444.24px;font-size:10px;color:#1b1b1b;left:1072.00px;transform-origin:0 0;transform:scaleX(0.98) translateX(-100%);">371.409,65</div>
<div class="t" style="top:444.24px;font-size:10px;color:#1b1b1b;left:1151.40px;transform-origin:0 0;transform:scaleX(0.96) translateX(-100%);">1,73%</div>
<div class="r" style="left:816.10px;top:458.30px;width:338.90px;height:19.00px;background:#ededed;"></div>
<div class="r" style="left:1004.50px;top:461.90px;width:4.23px;height:11.60px;background:#acceea;"></div>
<svg class="r" style="left:820.8px;top:464.3px" width="7" height="7" viewBox="0 0 7 7"><rect x="0.5" y="0.5" width="6" height="6" fill="none" stroke="#9a9a9a" stroke-width="0.8"/><path d="M1.8 3.5 H5.2" stroke="#777" stroke-width="0.8"/></svg>
<div class="t" style="top:463.04px;font-size:10px;color:#1b1b1b;left:835.00px;transform:scaleX(0.82);transform-origin:0 0;">FORNECEDOR DE EXEMPLO 6333</div>
<div class="t" style="top:463.24px;font-size:10px;color:#1b1b1b;left:1072.00px;transform-origin:0 0;transform:scaleX(0.98) translateX(-100%);">323.925,00</div>
<div class="t" style="top:463.24px;font-size:10px;color:#1b1b1b;left:1151.40px;transform-origin:0 0;transform:scaleX(0.96) translateX(-100%);">1,51%</div>
<div class="r" style="left:1004.50px;top:480.90px;width:4.21px;height:11.60px;background:#acceea;"></div>
<svg class="r" style="left:820.8px;top:483.3px" width="7" height="7" viewBox="0 0 7 7"><rect x="0.5" y="0.5" width="6" height="6" fill="none" stroke="#9a9a9a" stroke-width="0.8"/><path d="M1.8 3.5 H5.2" stroke="#777" stroke-width="0.8"/></svg>
<div class="t" style="top:482.04px;font-size:10px;color:#1b1b1b;left:835.00px;transform:scaleX(0.82);transform-origin:0 0;">FORNECEDOR DE EXEMPLO 3198</div>
<div class="t" style="top:482.24px;font-size:10px;color:#1b1b1b;left:1072.00px;transform-origin:0 0;transform:scaleX(0.98) translateX(-100%);">322.500,00</div>
<div class="t" style="top:482.24px;font-size:10px;color:#1b1b1b;left:1151.40px;transform-origin:0 0;transform:scaleX(0.96) translateX(-100%);">1,50%</div>
<div class="r" style="left:816.10px;top:497.30px;width:338.90px;height:2.60px;background:#ededed;"></div>
<div class="r" style="left:816.10px;top:323.80px;width:338.90px;height:2.00px;background:#cdd7ea;"></div>
<div class="r" style="left:1004.0px;top:325px;width:0;height:172px;border-left:1px dashed #555"></div>
<div class="t" style="top:503.44px;font-size:10px;color:#3f5068;font-weight:bold;left:835.00px;transform:scaleX(0.95);transform-origin:0 0;">Total</div>
<div class="t" style="top:503.44px;font-size:10px;color:#1f3f8a;font-weight:bold;left:1072.00px;transform-origin:0 0;transform:scaleX(1.02) translateX(-100%);">21.496.998,48</div>
<div class="t" style="top:503.44px;font-size:10px;color:#1f3f8a;font-weight:bold;left:1151.40px;transform-origin:0 0;transform:scaleX(1.04) translateX(-100%);">100,00%</div>
<div class="r" style="left:1156.5px;top:299.5px;width:5px;height:5px;border-radius:50%;background:#b4b4b4"></div>
<div class="r" style="left:96.00px;top:546.00px;width:1059.60px;height:37.30px;background:#1750a9;"></div>
<div class="r" style="left:236.60px;top:546.00px;width:1.00px;height:37.30px;background:#4c74bd;"></div>
<div class="r" style="left:407.80px;top:546.00px;width:1.00px;height:37.30px;background:#4c74bd;"></div>
<div class="r" style="left:457.70px;top:546.00px;width:1.00px;height:37.30px;background:#4c74bd;"></div>
<div class="r" style="left:504.20px;top:546.00px;width:1.00px;height:37.30px;background:#4c74bd;"></div>
<div class="r" style="left:562.00px;top:546.00px;width:1.00px;height:37.30px;background:#4c74bd;"></div>
<div class="r" style="left:623.00px;top:546.00px;width:1.00px;height:37.30px;background:#4c74bd;"></div>
<div class="r" style="left:735.10px;top:546.00px;width:1.00px;height:37.30px;background:#4c74bd;"></div>
<div class="r" style="left:828.90px;top:546.00px;width:1.00px;height:37.30px;background:#4c74bd;"></div>
<div class="r" style="left:1050.90px;top:546.00px;width:1.00px;height:37.30px;background:#4c74bd;"></div>
<div class="r" style="left:1098.80px;top:546.00px;width:1.00px;height:37.30px;background:#4c74bd;"></div>
<div class="t" style="top:551.53px;font-size:10px;color:#fff;font-weight:bold;left:166.55px;transform:translateX(-50%) scaleX(0.88);transform-origin:50% 0;">Favorecido</div>
<div class="t" style="top:551.53px;font-size:10px;color:#fff;font-weight:bold;left:322.70px;transform:translateX(-50%) scaleX(0.88);transform-origin:50% 0;">Origem</div>
<div class="t" style="top:551.53px;font-size:10px;color:#fff;font-weight:bold;left:411.80px;transform:scaleX(0.91);transform-origin:0 0;">Nº LCM</div>
<div class="t" style="top:551.53px;font-size:10px;color:#fff;font-weight:bold;left:461.70px;transform:scaleX(0.91);transform-origin:0 0;">Doc.</div>
<div class="t" style="top:551.53px;font-size:10px;color:#fff;font-weight:bold;left:533.60px;transform:translateX(-50%) scaleX(0.88);transform-origin:50% 0;">Data de</div>
<div class="t" style="top:564.53px;font-size:10px;color:#fff;font-weight:bold;left:533.60px;transform:translateX(-50%) scaleX(0.88);transform-origin:50% 0;">Criação</div>
<div class="t" style="top:551.53px;font-size:10px;color:#fff;font-weight:bold;left:593.00px;transform:translateX(-50%) scaleX(0.88);transform-origin:50% 0;">Data de</div>
<div class="t" style="top:564.53px;font-size:10px;color:#fff;font-weight:bold;left:593.00px;transform:translateX(-50%) scaleX(0.88);transform-origin:50% 0;">Venc.</div>
<div class="t" style="top:551.53px;font-size:10px;color:#fff;font-weight:bold;left:627.00px;transform:scaleX(0.91);transform-origin:0 0;">Dias em Atraso</div>
<div class="t" style="top:551.53px;font-size:10px;color:#fff;font-weight:bold;left:826.10px;transform-origin:0 0;transform:scaleX(0.88) translateX(-100%);">Valor</div>
<div class="t" style="top:551.53px;font-size:10px;color:#fff;font-weight:bold;left:880.10px;transform:translateX(-50%) scaleX(0.88);transform-origin:50% 0;">Filial</div>
<div class="t" style="top:551.53px;font-size:10px;color:#fff;font-weight:bold;left:991.10px;transform:translateX(-50%) scaleX(0.88);transform-origin:50% 0;">Projeto</div>
<div class="t" style="top:551.53px;font-size:10px;color:#fff;font-weight:bold;left:1075.35px;transform:translateX(-50%) scaleX(0.88);transform-origin:50% 0;">Status</div>
<div class="t" style="top:551.53px;font-size:10px;color:#fff;font-weight:bold;left:1127.45px;transform:translateX(-50%) scaleX(0.88);transform-origin:50% 0;">Processo</div>
<svg class="r" style="left:565.8px;top:573.8px" width="10" height="5" viewBox="0 0 10 5"><path d="M0.5 0.5 L8.5 0.5 L4.5 4 Z" fill="#fff"/></svg>
<div class="r" style="left:96px;top:583.3px;width:1059.6px;height:189.2px;overflow:hidden"><div class="r" style="left:0.00px;top:-10.78px;width:1059.60px;height:17.58px;background:#ededed;"></div><div class="t" style="top:11.04px;font-size:10px;color:#1b1b1b;left:4.00px;transform:scaleX(0.81);transform-origin:0 0;">FORNECEDOR DE EXEMPLO 1612</div><div class="t" style="top:11.04px;font-size:10px;color:#1b1b1b;left:145.30px;transform:scaleX(0.81);transform-origin:0 0;">CONSTRUÇÕES EM ANDAMENTO (OBRA)</div><div class="t" style="top:11.04px;font-size:10px;color:#1b1b1b;left:315.90px;transform:scaleX(0.88);transform-origin:0 0;">365572</div><div class="t" style="top:11.04px;font-size:10px;color:#1b1b1b;left:366.60px;transform:scaleX(0.88);transform-origin:0 0;">47734</div><div class="t" style="top:11.04px;font-size:10px;color:#1b1b1b;left:414.10px;transform:scaleX(0.92);transform-origin:0 0;">28/08/2024</div><div class="t" style="top:11.04px;font-size:10px;color:#1b1b1b;left:473.50px;transform:scaleX(0.92);transform-origin:0 0;">10/09/2024</div><div class="t" style="top:11.04px;font-size:10px;color:#c42a2e;left:531.20px;transform:scaleX(0.9);transform-origin:0 0;">05) Até 30 dias em Atraso</div><div class="t" style="top:11.04px;font-size:10px;color:#1b1b1b;left:730.00px;transform-origin:0 0;transform:scaleX(0.95) translateX(-100%);">8.370,00</div><div class="t" style="top:11.04px;font-size:10px;color:#1b1b1b;left:737.20px;transform:scaleX(0.82);transform-origin:0 0;">FILIAL DE EXEMPLO 2</div><div class="t" style="top:11.04px;font-size:10px;color:#1b1b1b;left:837.80px;transform:scaleX(0.82);transform-origin:0 0;">PROJETO DE EXEMPLO 136</div><div class="t" style="top:11.04px;font-size:10px;color:#1b1b1b;left:959.30px;transform:scaleX(0.82);transform-origin:0 0;">PREVISTO</div><div class="t" style="top:11.04px;font-size:10px;color:#1b1b1b;left:1007.80px;transform:scaleX(0.805);transform-origin:0 0;">PAGAMENTO</div><div class="r" style="left:0.00px;top:24.38px;width:1059.60px;height:17.58px;background:#ededed;"></div><div class="t" style="top:28.62px;font-size:10px;color:#1b1b1b;left:4.00px;transform:scaleX(0.81);transform-origin:0 0;">FORNECEDOR DE EXEMPLO 2212</div><div class="t" style="top:28.62px;font-size:10px;color:#1b1b1b;left:145.30px;transform:scaleX(0.81);transform-origin:0 0;">DESPESAS DE OCUPAÇÃO</div><div class="t" style="top:28.62px;font-size:10px;color:#1b1b1b;left:315.90px;transform:scaleX(0.88);transform-origin:0 0;">365853</div><div class="t" style="top:28.62px;font-size:10px;color:#1b1b1b;left:366.60px;transform:scaleX(0.88);transform-origin:0 0;">47804</div><div class="t" style="top:28.62px;font-size:10px;color:#1b1b1b;left:414.10px;transform:scaleX(0.92);transform-origin:0 0;">30/08/2024</div><div class="t" style="top:28.62px;font-size:10px;color:#1b1b1b;left:473.50px;transform:scaleX(0.92);transform-origin:0 0;">10/09/2024</div><div class="t" style="top:28.62px;font-size:10px;color:#c42a2e;left:531.20px;transform:scaleX(0.9);transform-origin:0 0;">05) Até 30 dias em Atraso</div><div class="t" style="top:28.62px;font-size:10px;color:#1b1b1b;left:730.00px;transform-origin:0 0;transform:scaleX(0.95) translateX(-100%);">265,19</div><div class="t" style="top:28.62px;font-size:10px;color:#1b1b1b;left:737.20px;transform:scaleX(0.82);transform-origin:0 0;">FILIAL DE EXEMPLO 24</div><div class="t" style="top:28.62px;font-size:10px;color:#1b1b1b;left:837.80px;transform:scaleX(0.82);transform-origin:0 0;">PROJETO DE EXEMPLO 1203</div><div class="t" style="top:28.62px;font-size:10px;color:#1b1b1b;left:959.30px;transform:scaleX(0.82);transform-origin:0 0;">PREVISTO</div><div class="t" style="top:28.62px;font-size:10px;color:#1b1b1b;left:1007.80px;transform:scaleX(0.805);transform-origin:0 0;">PAGAMENTO</div><div class="t" style="top:46.20px;font-size:10px;color:#1b1b1b;left:4.00px;transform:scaleX(0.81);transform-origin:0 0;">FORNECEDOR DE EXEMPLO 1608</div><div class="t" style="top:46.20px;font-size:10px;color:#1b1b1b;left:145.30px;transform:scaleX(0.81);transform-origin:0 0;">CONSTRUÇÕES EM ANDAMENTO (OBRA)</div><div class="t" style="top:46.20px;font-size:10px;color:#1b1b1b;left:315.90px;transform:scaleX(0.88);transform-origin:0 0;">365985</div><div class="t" style="top:46.20px;font-size:10px;color:#1b1b1b;left:366.60px;transform:scaleX(0.88);transform-origin:0 0;">47839</div><div class="t" style="top:46.20px;font-size:10px;color:#1b1b1b;left:414.10px;transform:scaleX(0.92);transform-origin:0 0;">30/08/2024</div><div class="t" style="top:46.20px;font-size:10px;color:#1b1b1b;left:473.50px;transform:scaleX(0.92);transform-origin:0 0;">10/09/2024</div><div class="t" style="top:46.20px;font-size:10px;color:#c42a2e;left:531.20px;transform:scaleX(0.9);transform-origin:0 0;">05) Até 30 dias em Atraso</div><div class="t" style="top:46.20px;font-size:10px;color:#1b1b1b;left:730.00px;transform-origin:0 0;transform:scaleX(0.95) translateX(-100%);">330,00</div><div class="t" style="top:46.20px;font-size:10px;color:#1b1b1b;left:737.20px;transform:scaleX(0.82);transform-origin:0 0;">FILIAL DE EXEMPLO 32</div><div class="t" style="top:46.20px;font-size:10px;color:#1b1b1b;left:837.80px;transform:scaleX(0.82);transform-origin:0 0;">PROJETO DE EXEMPLO 358</div><div class="t" style="top:46.20px;font-size:10px;color:#1b1b1b;left:959.30px;transform:scaleX(0.82);transform-origin:0 0;">PREVISTO</div><div class="t" style="top:46.20px;font-size:10px;color:#1b1b1b;left:1007.80px;transform:scaleX(0.805);transform-origin:0 0;">PAGAMENTO</div><div class="r" style="left:0.00px;top:59.54px;width:1059.60px;height:17.58px;background:#ededed;"></div><div class="t" style="top:63.78px;font-size:10px;color:#1b1b1b;left:4.00px;transform:scaleX(0.81);transform-origin:0 0;">FORNECEDOR DE EXEMPLO 2212</div><div class="t" style="top:63.78px;font-size:10px;color:#1b1b1b;left:145.30px;transform:scaleX(0.81);transform-origin:0 0;">CONSTRUÇÕES EM ANDAMENTO (ADM)</div><div class="t" style="top:63.78px;font-size:10px;color:#1b1b1b;left:315.90px;transform:scaleX(0.88);transform-origin:0 0;">366086</div><div class="t" style="top:63.78px;font-size:10px;color:#1b1b1b;left:366.60px;transform:scaleX(0.88);transform-origin:0 0;">47858</div><div class="t" style="top:63.78px;font-size:10px;color:#1b1b1b;left:414.10px;transform:scaleX(0.92);transform-origin:0 0;">02/09/2024</div><div class="t" style="top:63.78px;font-size:10px;color:#1b1b1b;left:473.50px;transform:scaleX(0.92);transform-origin:0 0;">10/09/2024</div><div class="t" style="top:63.78px;font-size:10px;color:#c42a2e;left:531.20px;transform:scaleX(0.9);transform-origin:0 0;">05) Até 30 dias em Atraso</div><div class="t" style="top:63.78px;font-size:10px;color:#1b1b1b;left:730.00px;transform-origin:0 0;transform:scaleX(0.95) translateX(-100%);">200,85</div><div class="t" style="top:63.78px;font-size:10px;color:#1b1b1b;left:737.20px;transform:scaleX(0.82);transform-origin:0 0;">FILIAL DE EXEMPLO 32</div><div class="t" style="top:63.78px;font-size:10px;color:#1b1b1b;left:837.80px;transform:scaleX(0.82);transform-origin:0 0;">PROJETO DE EXEMPLO 358</div><div class="t" style="top:63.78px;font-size:10px;color:#1b1b1b;left:959.30px;transform:scaleX(0.82);transform-origin:0 0;">PREVISTO</div><div class="t" style="top:63.78px;font-size:10px;color:#1b1b1b;left:1007.80px;transform:scaleX(0.805);transform-origin:0 0;">PAGAMENTO</div><div class="t" style="top:81.36px;font-size:10px;color:#1b1b1b;left:4.00px;transform:scaleX(0.81);transform-origin:0 0;">FORNECEDOR DE EXEMPLO 4100</div><div class="t" style="top:81.36px;font-size:10px;color:#1b1b1b;left:145.30px;transform:scaleX(0.81);transform-origin:0 0;">DESPESAS COM TI</div><div class="t" style="top:81.36px;font-size:10px;color:#1b1b1b;left:315.90px;transform:scaleX(0.88);transform-origin:0 0;">366156</div><div class="t" style="top:81.36px;font-size:10px;color:#1b1b1b;left:366.60px;transform:scaleX(0.88);transform-origin:0 0;">47867</div><div class="t" style="top:81.36px;font-size:10px;color:#1b1b1b;left:414.10px;transform:scaleX(0.92);transform-origin:0 0;">02/09/2024</div><div class="t" style="top:81.36px;font-size:10px;color:#1b1b1b;left:473.50px;transform:scaleX(0.92);transform-origin:0 0;">10/09/2024</div><div class="t" style="top:81.36px;font-size:10px;color:#c42a2e;left:531.20px;transform:scaleX(0.9);transform-origin:0 0;">05) Até 30 dias em Atraso</div><div class="t" style="top:81.36px;font-size:10px;color:#1b1b1b;left:730.00px;transform-origin:0 0;transform:scaleX(0.95) translateX(-100%);">12.669,75</div><div class="t" style="top:81.36px;font-size:10px;color:#1b1b1b;left:737.20px;transform:scaleX(0.82);transform-origin:0 0;">FILIAL DE EXEMPLO 8</div><div class="t" style="top:81.36px;font-size:10px;color:#1b1b1b;left:837.80px;transform:scaleX(0.82);transform-origin:0 0;">PROJETO DE EXEMPLO 1176</div><div class="t" style="top:81.36px;font-size:10px;color:#1b1b1b;left:959.30px;transform:scaleX(0.82);transform-origin:0 0;">PREVISTO</div><div class="t" style="top:81.36px;font-size:10px;color:#1b1b1b;left:1007.80px;transform:scaleX(0.805);transform-origin:0 0;">PAGAMENTO</div><div class="r" style="left:0.00px;top:94.70px;width:1059.60px;height:17.58px;background:#ededed;"></div><div class="t" style="top:98.94px;font-size:10px;color:#1b1b1b;left:4.00px;transform:scaleX(0.81);transform-origin:0 0;">FORNECEDOR DE EXEMPLO 6150</div><div class="t" style="top:98.94px;font-size:10px;color:#1b1b1b;left:145.30px;transform:scaleX(0.81);transform-origin:0 0;">DESPESAS C/ SERVIÇOS PRESTADOS</div><div class="t" style="top:98.94px;font-size:10px;color:#1b1b1b;left:315.90px;transform:scaleX(0.88);transform-origin:0 0;">366323</div><div class="t" style="top:98.94px;font-size:10px;color:#1b1b1b;left:366.60px;transform:scaleX(0.88);transform-origin:0 0;">47905</div><div class="t" style="top:98.94px;font-size:10px;color:#1b1b1b;left:414.10px;transform:scaleX(0.92);transform-origin:0 0;">02/09/2024</div><div class="t" style="top:98.94px;font-size:10px;color:#1b1b1b;left:473.50px;transform:scaleX(0.92);transform-origin:0 0;">10/09/2024</div><div class="t" style="top:98.94px;font-size:10px;color:#c42a2e;left:531.20px;transform:scaleX(0.9);transform-origin:0 0;">05) Até 30 dias em Atraso</div><div class="t" style="top:98.94px;font-size:10px;color:#1b1b1b;left:730.00px;transform-origin:0 0;transform:scaleX(0.95) translateX(-100%);">570,00</div><div class="t" style="top:98.94px;font-size:10px;color:#1b1b1b;left:737.20px;transform:scaleX(0.82);transform-origin:0 0;">FILIAL DE EXEMPLO 25</div><div class="t" style="top:98.94px;font-size:10px;color:#1b1b1b;left:837.80px;transform:scaleX(0.82);transform-origin:0 0;">PROJETO DE EXEMPLO 613</div><div class="t" style="top:98.94px;font-size:10px;color:#1b1b1b;left:959.30px;transform:scaleX(0.82);transform-origin:0 0;">PREVISTO</div><div class="t" style="top:98.94px;font-size:10px;color:#1b1b1b;left:1007.80px;transform:scaleX(0.805);transform-origin:0 0;">PAGAMENTO</div><div class="t" style="top:116.52px;font-size:10px;color:#1b1b1b;left:4.00px;transform:scaleX(0.81);transform-origin:0 0;">FORNECEDOR DE EXEMPLO 1939</div><div class="t" style="top:116.52px;font-size:10px;color:#1b1b1b;left:145.30px;transform:scaleX(0.81);transform-origin:0 0;">DESPESAS DE OCUPAÇÃO</div><div class="t" style="top:116.52px;font-size:10px;color:#1b1b1b;left:315.90px;transform:scaleX(0.88);transform-origin:0 0;">366628</div><div class="t" style="top:116.52px;font-size:10px;color:#1b1b1b;left:366.60px;transform:scaleX(0.88);transform-origin:0 0;">47948</div><div class="t" style="top:116.52px;font-size:10px;color:#1b1b1b;left:414.10px;transform:scaleX(0.92);transform-origin:0 0;">03/09/2024</div><div class="t" style="top:116.52px;font-size:10px;color:#1b1b1b;left:473.50px;transform:scaleX(0.92);transform-origin:0 0;">10/09/2024</div><div class="t" style="top:116.52px;font-size:10px;color:#c42a2e;left:531.20px;transform:scaleX(0.9);transform-origin:0 0;">05) Até 30 dias em Atraso</div><div class="t" style="top:116.52px;font-size:10px;color:#1b1b1b;left:730.00px;transform-origin:0 0;transform:scaleX(0.95) translateX(-100%);">1.954,70</div><div class="t" style="top:116.52px;font-size:10px;color:#1b1b1b;left:737.20px;transform:scaleX(0.82);transform-origin:0 0;">FILIAL DE EXEMPLO 22</div><div class="t" style="top:116.52px;font-size:10px;color:#1b1b1b;left:837.80px;transform:scaleX(0.82);transform-origin:0 0;">PROJETO DE EXEMPLO 1423</div><div class="t" style="top:116.52px;font-size:10px;color:#1b1b1b;left:959.30px;transform:scaleX(0.82);transform-origin:0 0;">PREVISTO</div><div class="t" style="top:116.52px;font-size:10px;color:#1b1b1b;left:1007.80px;transform:scaleX(0.805);transform-origin:0 0;">PAGAMENTO</div><div class="r" style="left:0.00px;top:129.86px;width:1059.60px;height:17.58px;background:#ededed;"></div><div class="t" style="top:134.10px;font-size:10px;color:#1b1b1b;left:4.00px;transform:scaleX(0.81);transform-origin:0 0;">FORNECEDOR DE EXEMPLO 1939</div><div class="t" style="top:134.10px;font-size:10px;color:#1b1b1b;left:145.30px;transform:scaleX(0.81);transform-origin:0 0;">DESPESAS DE OCUPAÇÃO</div><div class="t" style="top:134.10px;font-size:10px;color:#1b1b1b;left:315.90px;transform:scaleX(0.88);transform-origin:0 0;">366631</div><div class="t" style="top:134.10px;font-size:10px;color:#1b1b1b;left:366.60px;transform:scaleX(0.88);transform-origin:0 0;">47949</div><div class="t" style="top:134.10px;font-size:10px;color:#1b1b1b;left:414.10px;transform:scaleX(0.92);transform-origin:0 0;">03/09/2024</div><div class="t" style="top:134.10px;font-size:10px;color:#1b1b1b;left:473.50px;transform:scaleX(0.92);transform-origin:0 0;">10/09/2024</div><div class="t" style="top:134.10px;font-size:10px;color:#c42a2e;left:531.20px;transform:scaleX(0.9);transform-origin:0 0;">05) Até 30 dias em Atraso</div><div class="t" style="top:134.10px;font-size:10px;color:#1b1b1b;left:730.00px;transform-origin:0 0;transform:scaleX(0.95) translateX(-100%);">2.339,13</div><div class="t" style="top:134.10px;font-size:10px;color:#1b1b1b;left:737.20px;transform:scaleX(0.82);transform-origin:0 0;">FILIAL DE EXEMPLO 22</div><div class="t" style="top:134.10px;font-size:10px;color:#1b1b1b;left:837.80px;transform:scaleX(0.82);transform-origin:0 0;">PROJETO DE EXEMPLO 709</div><div class="t" style="top:134.10px;font-size:10px;color:#1b1b1b;left:959.30px;transform:scaleX(0.82);transform-origin:0 0;">PREVISTO</div><div class="t" style="top:134.10px;font-size:10px;color:#1b1b1b;left:1007.80px;transform:scaleX(0.805);transform-origin:0 0;">PAGAMENTO</div><div class="t" style="top:151.68px;font-size:10px;color:#1b1b1b;left:4.00px;transform:scaleX(0.81);transform-origin:0 0;">FORNECEDOR DE EXEMPLO 1939</div><div class="t" style="top:151.68px;font-size:10px;color:#1b1b1b;left:145.30px;transform:scaleX(0.81);transform-origin:0 0;">DESPESAS DE OCUPAÇÃO</div><div class="t" style="top:151.68px;font-size:10px;color:#1b1b1b;left:315.90px;transform:scaleX(0.88);transform-origin:0 0;">366632</div><div class="t" style="top:151.68px;font-size:10px;color:#1b1b1b;left:366.60px;transform:scaleX(0.88);transform-origin:0 0;">47950</div><div class="t" style="top:151.68px;font-size:10px;color:#1b1b1b;left:414.10px;transform:scaleX(0.92);transform-origin:0 0;">03/09/2024</div><div class="t" style="top:151.68px;font-size:10px;color:#1b1b1b;left:473.50px;transform:scaleX(0.92);transform-origin:0 0;">10/09/2024</div><div class="t" style="top:151.68px;font-size:10px;color:#c42a2e;left:531.20px;transform:scaleX(0.9);transform-origin:0 0;">05) Até 30 dias em Atraso</div><div class="t" style="top:151.68px;font-size:10px;color:#1b1b1b;left:730.00px;transform-origin:0 0;transform:scaleX(0.95) translateX(-100%);">2.240,01</div><div class="t" style="top:151.68px;font-size:10px;color:#1b1b1b;left:737.20px;transform:scaleX(0.82);transform-origin:0 0;">FILIAL DE EXEMPLO 22</div><div class="t" style="top:151.68px;font-size:10px;color:#1b1b1b;left:837.80px;transform:scaleX(0.82);transform-origin:0 0;">PROJETO DE EXEMPLO 774</div><div class="t" style="top:151.68px;font-size:10px;color:#1b1b1b;left:959.30px;transform:scaleX(0.82);transform-origin:0 0;">PREVISTO</div><div class="t" style="top:151.68px;font-size:10px;color:#1b1b1b;left:1007.80px;transform:scaleX(0.805);transform-origin:0 0;">PAGAMENTO</div><div class="r" style="left:0.00px;top:165.02px;width:1059.60px;height:17.58px;background:#ededed;"></div><div class="t" style="top:169.26px;font-size:10px;color:#1b1b1b;left:4.00px;transform:scaleX(0.81);transform-origin:0 0;">FORNECEDOR DE EXEMPLO 1939</div><div class="t" style="top:169.26px;font-size:10px;color:#1b1b1b;left:145.30px;transform:scaleX(0.81);transform-origin:0 0;">DESPESAS DE OCUPAÇÃO</div><div class="t" style="top:169.26px;font-size:10px;color:#1b1b1b;left:315.90px;transform:scaleX(0.88);transform-origin:0 0;">366633</div><div class="t" style="top:169.26px;font-size:10px;color:#1b1b1b;left:366.60px;transform:scaleX(0.88);transform-origin:0 0;">47951</div><div class="t" style="top:169.26px;font-size:10px;color:#1b1b1b;left:414.10px;transform:scaleX(0.92);transform-origin:0 0;">03/09/2024</div><div class="t" style="top:169.26px;font-size:10px;color:#1b1b1b;left:473.50px;transform:scaleX(0.92);transform-origin:0 0;">10/09/2024</div><div class="t" style="top:169.26px;font-size:10px;color:#c42a2e;left:531.20px;transform:scaleX(0.9);transform-origin:0 0;">05) Até 30 dias em Atraso</div><div class="t" style="top:169.26px;font-size:10px;color:#1b1b1b;left:730.00px;transform-origin:0 0;transform:scaleX(0.95) translateX(-100%);">2.339,13</div><div class="t" style="top:169.26px;font-size:10px;color:#1b1b1b;left:737.20px;transform:scaleX(0.82);transform-origin:0 0;">FILIAL DE EXEMPLO 22</div><div class="t" style="top:169.26px;font-size:10px;color:#1b1b1b;left:837.80px;transform:scaleX(0.82);transform-origin:0 0;">PROJETO DE EXEMPLO 763</div><div class="t" style="top:169.26px;font-size:10px;color:#1b1b1b;left:959.30px;transform:scaleX(0.82);transform-origin:0 0;">PREVISTO</div><div class="t" style="top:169.26px;font-size:10px;color:#1b1b1b;left:1007.80px;transform:scaleX(0.805);transform-origin:0 0;">PAGAMENTO</div><div class="t" style="top:186.84px;font-size:10px;color:#1b1b1b;left:4.00px;transform:scaleX(0.81);transform-origin:0 0;">FORNECEDOR DE EXEMPLO 1939</div><div class="t" style="top:186.84px;font-size:10px;color:#1b1b1b;left:145.30px;transform:scaleX(0.81);transform-origin:0 0;">DESPESAS DE OCUPAÇÃO</div><div class="t" style="top:186.84px;font-size:10px;color:#1b1b1b;left:315.90px;transform:scaleX(0.88);transform-origin:0 0;">366634</div><div class="t" style="top:186.84px;font-size:10px;color:#1b1b1b;left:366.60px;transform:scaleX(0.88);transform-origin:0 0;">47952</div><div class="t" style="top:186.84px;font-size:10px;color:#1b1b1b;left:414.10px;transform:scaleX(0.92);transform-origin:0 0;">03/09/2024</div><div class="t" style="top:186.84px;font-size:10px;color:#1b1b1b;left:473.50px;transform:scaleX(0.92);transform-origin:0 0;">10/09/2024</div><div class="t" style="top:186.84px;font-size:10px;color:#c42a2e;left:531.20px;transform:scaleX(0.9);transform-origin:0 0;">05) Até 30 dias em Atraso</div><div class="t" style="top:186.84px;font-size:10px;color:#1b1b1b;left:730.00px;transform-origin:0 0;transform:scaleX(0.95) translateX(-100%);">1.884,41</div><div class="t" style="top:186.84px;font-size:10px;color:#1b1b1b;left:737.20px;transform:scaleX(0.82);transform-origin:0 0;">FILIAL DE EXEMPLO 8</div><div class="t" style="top:186.84px;font-size:10px;color:#1b1b1b;left:837.80px;transform:scaleX(0.82);transform-origin:0 0;">PROJETO DE EXEMPLO 1176</div><div class="t" style="top:186.84px;font-size:10px;color:#1b1b1b;left:959.30px;transform:scaleX(0.82);transform-origin:0 0;">PREVISTO</div><div class="t" style="top:186.84px;font-size:10px;color:#1b1b1b;left:1007.80px;transform:scaleX(0.805);transform-origin:0 0;">PAGAMENTO</div></div>
<div class="t" style="top:777.03px;font-size:10px;color:#1f3f8a;font-weight:bold;left:100.00px;transform:scaleX(0.95);transform-origin:0 0;">Total</div>
<div class="t" style="top:777.03px;font-size:10px;color:#1f3f8a;font-weight:bold;left:826.00px;transform-origin:0 0;transform:scaleX(1.02) translateX(-100%);">21.496.998,48</div>
<div class="r" style="left:96.70px;top:791.10px;width:881.30px;height:4.70px;background:#ababab;border-radius:2.4px"></div>
<div class="r" style="left:1156.2px;top:623.4px;width:5px;height:5px;border-radius:50%;background:#b4b4b4"></div>
</body></html>
